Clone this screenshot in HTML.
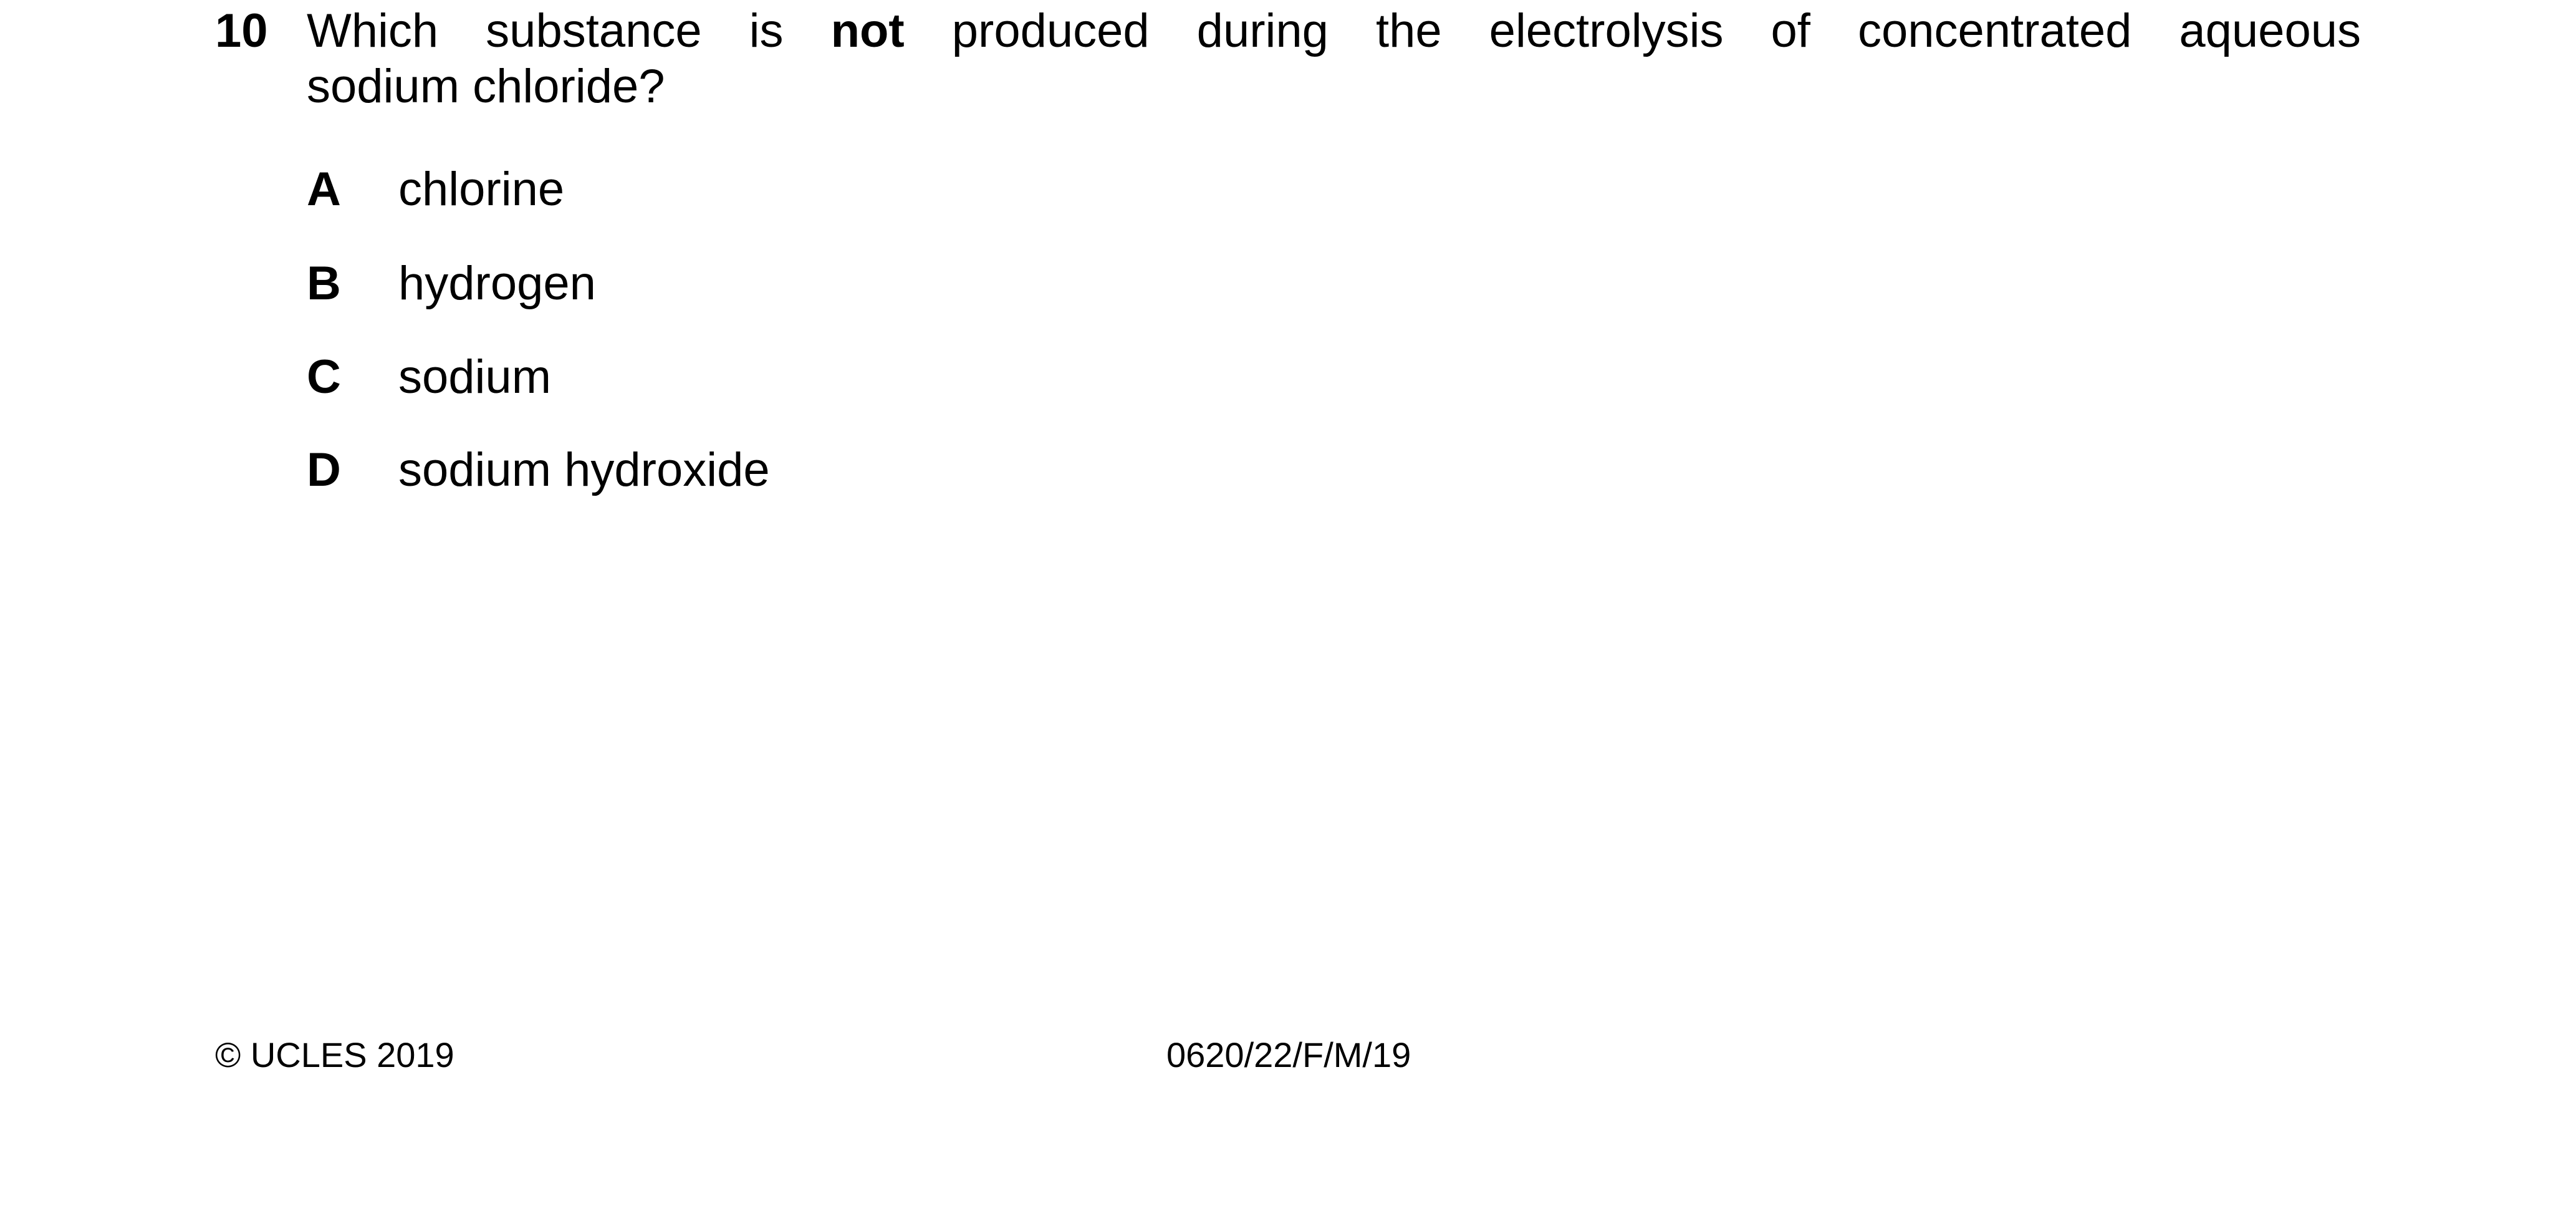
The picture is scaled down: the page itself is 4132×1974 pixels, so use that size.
<!DOCTYPE html>
<html><head><meta charset="utf-8"><style>
html,body{margin:0;padding:0;background:#fff;}
body{width:4132px;height:1974px;position:relative;overflow:hidden;font-family:"Liberation Sans",Arial,sans-serif;color:#000;}
.t{position:absolute;font-size:76px;line-height:1;white-space:nowrap;}
.f{position:absolute;font-size:56px;line-height:1;white-space:nowrap;}
b{font-weight:bold;}
</style></head><body>
<div class="t" style="left:345px;top:12px;"><b>10</b></div>
<div class="t" style="left:492px;top:12px;width:3295px;text-align:justify;text-align-last:justify;white-space:normal;">Which substance is <b>not</b> produced during the electrolysis of concentrated aqueous</div>
<div class="t" style="left:492px;top:101px;">sodium chloride?</div>
<div class="t" style="left:492px;top:266px;"><b>A</b></div>
<div class="t" style="left:639px;top:266px;">chlorine</div>
<div class="t" style="left:492px;top:417px;"><b>B</b></div>
<div class="t" style="left:639px;top:417px;">hydrogen</div>
<div class="t" style="left:492px;top:567px;"><b>C</b></div>
<div class="t" style="left:639px;top:567px;">sodium</div>
<div class="t" style="left:492px;top:716px;"><b>D</b></div>
<div class="t" style="left:639px;top:716px;">sodium hydroxide</div>
<div class="f" style="left:345px;top:1664px;">© UCLES 2019</div>
<div class="f" style="left:1871px;top:1664px;">0620/22/F/M/19</div>
</body></html>
